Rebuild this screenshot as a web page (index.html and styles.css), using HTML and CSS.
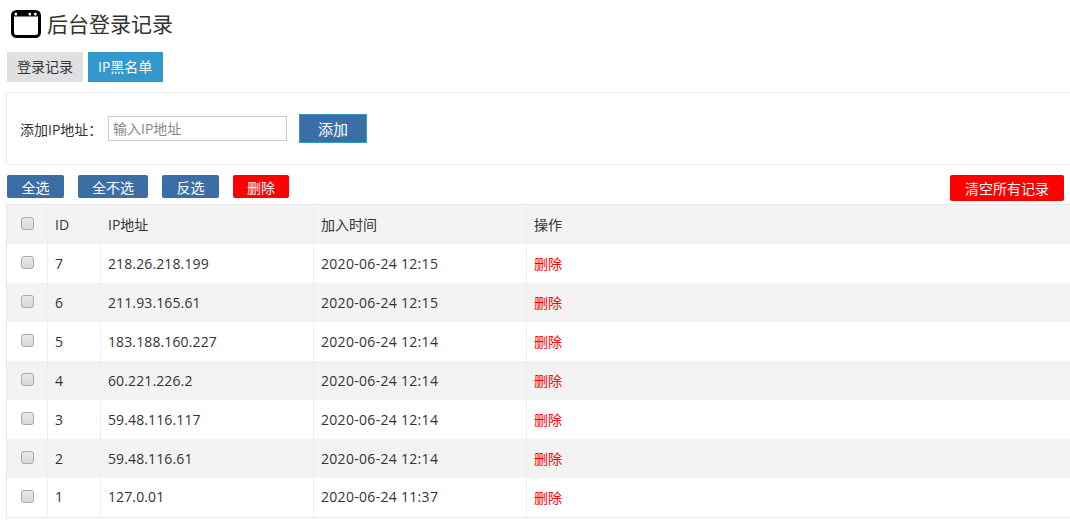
FILE: index.html
```html
<!DOCTYPE html>
<html lang="zh-CN">

<head>
    <meta charset="utf-8">
    <title>后台登录记录</title>
    <link rel="stylesheet" href="styles.css">
</head>

<body>
    <div class="page">
        <h1 class="title">
            <svg class="title-icon" viewBox="0 0 30 28" width="30" height="28">
                <rect x="1.5" y="1.5" width="27" height="25" rx="4" fill="#fff" stroke="#000" stroke-width="3" />
                <rect x="1.5" y="1.5" width="27" height="5" rx="2" fill="#000" />
                <rect x="3.5" y="2.8" width="2.6" height="2.6" rx="1" fill="#fff" />
                <rect x="17.5" y="2.8" width="2.6" height="2.6" rx="1" fill="#fff" />
                <rect x="23" y="2.8" width="2.6" height="2.6" rx="1" fill="#fff" />
            </svg>
            后台登录记录
        </h1>

        <nav class="tabs">
            <a class="tab">登录记录</a>
            <a class="tab active">IP黑名单</a>
        </nav>

        <section class="add-panel">
            <label class="add-label">添加IP地址：</label>
            <input class="add-input" type="text" placeholder="输入IP地址">
            <button class="add-btn">添加</button>
        </section>

        <div class="toolbar">
            <button class="btn blue w-2">全选</button>
            <button class="btn blue w-3">全不选</button>
            <button class="btn blue w-2">反选</button>
            <button class="btn red w-del">删除</button>
            <button class="btn red clear">清空所有记录</button>
        </div>

        <table class="list">
            <thead>
                <tr>
                    <th class="c-check"><input type="checkbox"></th>
                    <th class="c-id">ID</th>
                    <th class="c-ip">IP地址</th>
                    <th class="c-time">加入时间</th>
                    <th>操作</th>
                </tr>
            </thead>
            <tbody>
                <tr>
                    <td class="c-check"><input type="checkbox"></td>
                    <td>7</td>
                    <td class="ip">218.26.218.199</td>
                    <td class="time">2020-06-24 12:15</td>
                    <td><a class="del">删除</a></td>
                </tr>
                <tr>
                    <td class="c-check"><input type="checkbox"></td>
                    <td>6</td>
                    <td class="ip">211.93.165.61</td>
                    <td class="time">2020-06-24 12:15</td>
                    <td><a class="del">删除</a></td>
                </tr>
                <tr>
                    <td class="c-check"><input type="checkbox"></td>
                    <td>5</td>
                    <td class="ip">183.188.160.227</td>
                    <td class="time">2020-06-24 12:14</td>
                    <td><a class="del">删除</a></td>
                </tr>
                <tr>
                    <td class="c-check"><input type="checkbox"></td>
                    <td>4</td>
                    <td class="ip">60.221.226.2</td>
                    <td class="time">2020-06-24 12:14</td>
                    <td><a class="del">删除</a></td>
                </tr>
                <tr>
                    <td class="c-check"><input type="checkbox"></td>
                    <td>3</td>
                    <td class="ip">59.48.116.117</td>
                    <td class="time">2020-06-24 12:14</td>
                    <td><a class="del">删除</a></td>
                </tr>
                <tr>
                    <td class="c-check"><input type="checkbox"></td>
                    <td>2</td>
                    <td class="ip">59.48.116.61</td>
                    <td class="time">2020-06-24 12:14</td>
                    <td><a class="del">删除</a></td>
                </tr>
                <tr>
                    <td class="c-check"><input type="checkbox"></td>
                    <td>1</td>
                    <td class="ip">127.0.01</td>
                    <td class="time">2020-06-24 11:37</td>
                    <td><a class="del">删除</a></td>
                </tr>
            </tbody>
        </table>
    </div>
</body>

</html>
```

FILE: styles.css
```css
* {
    box-sizing: border-box;
}

html,
body {
    margin: 0;
    height: 532px;
    overflow: hidden;
    background: #fff;
}

body {
    font-family: "Open Sans", "Noto Sans CJK SC", sans-serif;
    font-size: 14px;
    color: #333;
}

.page {
    width: 1090px;
    padding: 10px 0 0 6px;
}

.title {
    display: flex;
    align-items: center;
    gap: 6px;
    height: 28px;
    margin: 0 0 14px 5px;
    font-size: 21px;
    line-height: 26px;
    font-weight: 400;
}

.title-icon {
    flex: none;
}

.tabs {
    display: flex;
    gap: 5px;
    margin: 0 0 10px 1px;
}

.tab {
    height: 30px;
    padding: 0 10px;
    line-height: 30px;
    font-size: 14px;
    background: #dfe0e2;
}

.tab.active {
    padding-right: 11px;
    background: #3399cc;
    color: #fff;
}

.add-panel {
    display: flex;
    align-items: center;
    height: 73px;
    padding-left: 13px;
    border: 1px solid #ececec;
    border-radius: 3px;
}

.add-label {
    width: 88px;
    font-size: 14px;
}

.add-input {
    width: 179px;
    height: 25px;
    margin-right: 12px;
    padding: 0 4px;
    border: 1px solid #ccc;
    font-family: inherit;
    font-size: 14px;
}

.add-input::placeholder {
    color: #888;
}

.add-btn {
    width: 68px;
    height: 29px;
    border: 1px solid #3399cc;
    background: #3b6ea5;
    color: #fff;
    font-family: inherit;
    font-size: 15px;
}

.toolbar {
    display: flex;
    align-items: flex-start;
    gap: 14px;
    height: 29px;
    margin: 10px 0 0 1px;
}

.btn {
    height: 23px;
    padding: 0;
    border: 0;
    border-radius: 2px;
    color: #fff;
    font-family: inherit;
    font-size: 14px;
}

.blue {
    background: #3b6ea5;
}

.red {
    background: #f00;
}

.w-2 {
    width: 57px;
}

.w-3 {
    width: 70px;
}

.w-del {
    width: 56px;
}

.clear {
    width: 114px;
    height: 26px;
    margin-left: 647px;
}

.list {
    width: 100%;
    border-collapse: collapse;
    table-layout: fixed;
    border: 1px solid #e8e8e8;
}

.list th,
.list td {
    height: 39px;
    padding: 0 0 0 7px;
    border-right: 1px solid #eee;
    font-weight: 400;
    text-align: left;
}

.list tbody tr:last-child td {
    height: 40px;
    padding-bottom: 1px;
}

.list thead tr,
.list tbody tr:nth-child(even) {
    background: #f3f3f3;
}

.list .c-check,
.list tbody tr:last-child .c-check {
    width: 41px;
    padding: 0 0 1px 14px;
}

.c-check input {
    display: block;
    width: 13px;
    height: 13px;
    margin: 0;
    appearance: none;
    border: 1px solid #aaa;
    border-radius: 3px;
    background: linear-gradient(#e8e8e8, #d8d8d8);
}

.c-id {
    width: 53px;
}

.c-ip,
.c-time {
    width: 213px;
}

.ip {
    letter-spacing: .12px;
}

.time {
    letter-spacing: .3px;
}

.del {
    font-size: 14px;
    color: #f00;
}
```
